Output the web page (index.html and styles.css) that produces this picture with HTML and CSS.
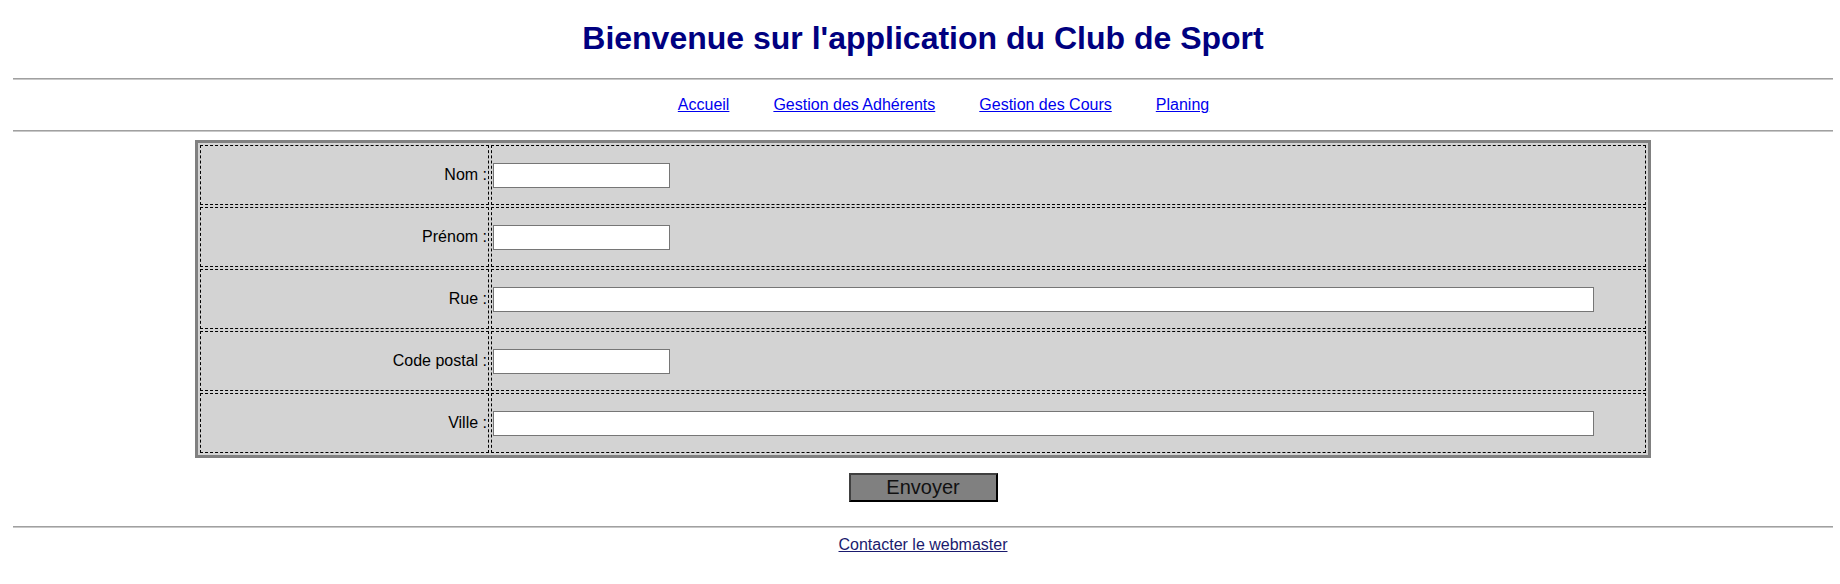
FILE: index.html
```html
<!DOCTYPE html>
<html lang="fr">
<head>
<meta charset="utf-8">
<title>Club de Sport</title>
<link rel="stylesheet" href="styles.css">
</head>
<body>
<h1 class="title">Bienvenue sur l'application du Club de Sport</h1>
<hr class="rule">
<nav class="nav">
  <a class="nav-link" href="#">Accueil</a>
  <a class="nav-link" href="#">Gestion des Adhérents</a>
  <a class="nav-link" href="#">Gestion des Cours</a>
  <a class="nav-link" href="#">Planing</a>
</nav>
<hr class="rule">
<form class="form">
  <table class="grid">
    <tr><td class="label">Nom :</td><td class="field"><input class="input short" type="text"></td></tr>
    <tr><td class="label">Prénom :</td><td class="field"><input class="input short" type="text"></td></tr>
    <tr><td class="label">Rue :</td><td class="field"><input class="input long" type="text"></td></tr>
    <tr><td class="label">Code postal :</td><td class="field"><input class="input short" type="text"></td></tr>
    <tr><td class="label">Ville :</td><td class="field"><input class="input long" type="text"></td></tr>
  </table>
  <div class="actions"><button class="submit" type="button">Envoyer</button></div>
</form>
<hr class="rule">
<footer class="footer"><a class="footer-link" href="#">Contacter le webmaster</a></footer>
</body>
</html>
```
FILE: styles.css
```css
body {
  margin: 8px 7px 8px 13px;
  font-family: "Liberation Sans", Arial, sans-serif;
  font-size: 16px;
  color: #000;
  background: #fff;
}

.title {
  font-size: 32px;
  font-weight: bold;
  color: #000080;
  text-align: center;
  margin: 12px 0 21px;
}

.rule {
  margin: 8px 0;
  border: 0;
  border-top: 1px solid #a0a0a0;
  border-bottom: 1px solid #c8c8c8;
  height: 0;
}

.nav {
  display: flex;
  justify-content: center;
  gap: 44px;
  padding-left: 41px;
  margin: 16px 0 16px;
}

.nav-link {
  color: #0000ee;
}

.form {
  margin: 0;
}

.grid {
  width: 80%;
  margin: 0 auto;
  table-layout: fixed;
  border: 3px solid #808080;
  border-spacing: 2px;
  background: #d3d3d3;
}

.grid td {
  box-sizing: border-box;
  height: 60px;
  padding: 1px;
  border: 1px dashed #000;
  vertical-align: middle;
}

.grid .label {
  width: 289px;
  text-align: right;
}

.input {
  display: block;
  box-sizing: border-box;
  height: 25px;
  margin: 0;
  padding: 1px 2px;
  border: 1px solid #767676;
  background: #fff;
  font: 13.33px "Liberation Sans", Arial, sans-serif;
}

.short {
  width: 177px;
}

.long {
  width: 1101px;
}

.actions {
  display: flex;
  justify-content: center;
  margin: 15px 0 24px;
}

.submit {
  box-sizing: border-box;
  width: 149px;
  height: 29px;
  padding: 0;
  background: #808080;
  border: 2px solid;
  border-color: #404040 #000 #000 #404040;
  color: #111;
  font: 20px "Liberation Sans", Arial, sans-serif;
}

.footer {
  text-align: center;
}

.footer-link {
  color: #1a1a6e;
}
```
